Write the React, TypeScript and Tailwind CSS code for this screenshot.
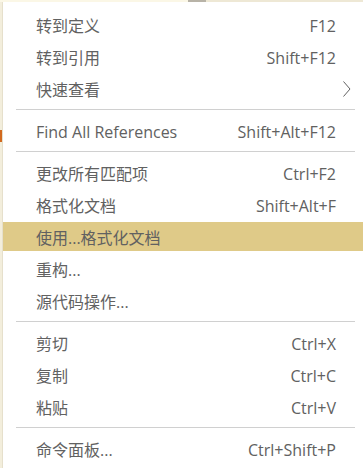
import React from "react";

type Item = { label: string; shortcut?: string; submenu?: boolean; active?: boolean };

const groups: Item[][] = [
  [
    { label: "转到定义", shortcut: "F12" },
    { label: "转到引用", shortcut: "Shift+F12" },
    { label: "快速查看", submenu: true },
  ],
  [{ label: "Find All References", shortcut: "Shift+Alt+F12" }],
  [
    { label: "更改所有匹配项", shortcut: "Ctrl+F2" },
    { label: "格式化文档", shortcut: "Shift+Alt+F" },
    { label: "使用...格式化文档", active: true },
    { label: "重构..." },
    { label: "源代码操作..." },
  ],
  [
    { label: "剪切", shortcut: "Ctrl+X" },
    { label: "复制", shortcut: "Ctrl+C" },
    { label: "粘贴", shortcut: "Ctrl+V" },
  ],
  [{ label: "命令面板...", shortcut: "Ctrl+Shift+P" }],
];

function Row({ item, first }: { item: Item; first: boolean }) {
  return (
    <div
      className={`flex h-[29px] items-center justify-between pl-[33px] ${
        item.submenu ? "pr-[12px]" : "pr-[27px]"
      } ${first ? "" : "mt-[3px]"} ${item.active ? "bg-[#dfca88]" : ""}`}
    >
      <span className="pt-[2px]">{item.label}</span>
      {item.shortcut && <span className="pt-[2px]">{item.shortcut}</span>}
      {item.submenu && (
        <svg width="8" height="16" viewBox="0 0 8 16" fill="none" stroke="#616161" strokeWidth="1">
          <polyline points="0.5,0.5 7,8 0.5,15.5" />
        </svg>
      )}
    </div>
  );
}

export default function App() {
  return (
    <div className="h-[468px] w-[363px] overflow-hidden bg-[#fdf6e3] font-['Segoe_UI','Open_Sans','Noto_Sans_CJK_SC',sans-serif] text-[16px] text-[#616161]">
      {/* editor strip behind the menu */}
      <div className="flex h-[2px]">
        <div className="w-[188px] bg-[#fbf7e6]" />
        <div className="w-[18px] bg-[#b8b3a7]" />
        <div className="flex-1 bg-[#eee8d5]" />
      </div>
      <div className="flex h-[466px]">
        <div className="flex w-[3px] flex-col border-r border-[#e6e0cc] bg-[#f3eedc]">
          <div className="mt-[128px] h-[12px] w-[2px] bg-[#d2691e]" />
        </div>
        {/* context menu */}
        <div className="flex-1 bg-white pt-[8px]">
          {groups.map((group, gi) => (
            <div key={gi}>
              {gi > 0 && (
                <div className="h-[13px] pt-[6px]">
                  <div className="ml-[13px] mr-[8px] h-px bg-[#d0d0d0]" />
                </div>
              )}
              {group.map((item, i) => (
                <Row key={item.label} item={item} first={i === 0} />
              ))}
            </div>
          ))}
        </div>
      </div>
    </div>
  );
}
